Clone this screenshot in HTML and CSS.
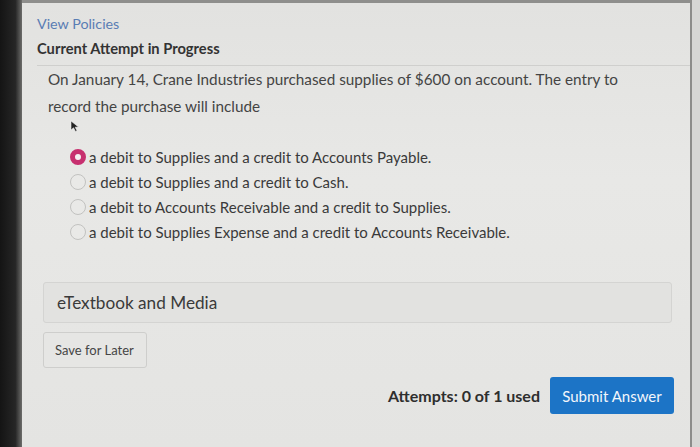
FILE: index.html
```html
<!DOCTYPE html>
<html>
<head>
<meta charset="utf-8">
<link rel="stylesheet" href="styles.css">
</head>
<body>
<div class="screen">
  <div class="bezel"></div>
  <main class="page">
    <a class="policies">View Policies</a>
    <h2 class="attempt-title">Current Attempt in Progress</h2>
    <div class="rule"></div>
    <section class="question">
      <p class="prompt">On January 14, Crane Industries purchased supplies of $600 on account. The entry to record the purchase will include</p>
      <div class="cursor-row">
        <svg class="cursor" width="10" height="12" viewBox="0 0 10 12"><path d="M1 1 L1 10 L3.5 7.8 L5.5 11.5 L7 10.8 L5.2 7.2 L8.5 7 Z" fill="#222" stroke="#eee" stroke-width="0.6"/></svg>
      </div>
      <ul class="options">
        <li class="option"><span class="radio selected"></span>a debit to Supplies and a credit to Accounts Payable.</li>
        <li class="option"><span class="radio"></span>a debit to Supplies and a credit to Cash.</li>
        <li class="option"><span class="radio"></span>a debit to Accounts Receivable and a credit to Supplies.</li>
        <li class="option"><span class="radio"></span>a debit to Supplies Expense and a credit to Accounts Receivable.</li>
      </ul>
    </section>
    <div class="media">eTextbook and Media</div>
    <button class="save">Save for Later</button>
    <div class="footer">
      <span class="attempts">Attempts: 0 of 1 used</span>
      <button class="submit">Submit Answer</button>
    </div>
  </main>
  <div class="edge"></div>
</div>
</body>
</html>
```
FILE: styles.css
```css
* { box-sizing: border-box; }
html, body { margin: 0; padding: 0; }
body {
  width: 700px;
  height: 447px;
  overflow: hidden;
  background: #1b1b1b;
  font-family: Lato, "Open Sans", sans-serif;
  color: #3b3b3b;
}
.screen {
  display: flex;
  height: 447px;
}
.bezel {
  width: 22px;
  background: linear-gradient(to right, #141414 0%, #262626 70%, #6d6d6b 100%);
}
.page {
  flex: 1;
  background: linear-gradient(to bottom, #e2e2e0 0%, #e8e8e6 40%, #e4e4e2 100%);
  border-top: 3px solid #8e8e8c;
  padding: 12px 0 0 15px;
  display: flex;
  flex-direction: column;
  align-items: flex-start;
}
.edge {
  width: 10px;
  background: #d6d6d4;
  border-left: 2px solid #8c8c8a;
}
.policies {
  font-size: 14.3px;
  color: #5a7db4;
  line-height: 18px;
}
.attempt-title {
  margin: 6px 0 0;
  font-size: 14.7px;
  font-weight: 700;
  color: #333;
  line-height: 18px;
}
.rule {
  align-self: stretch;
  margin: 8px 0 0;
  height: 1px;
  background: #cfcfcd;
}
.question {
  padding: 0 0 0 11px;
}
.prompt {
  margin: 0;
  width: 580px;
  font-size: 15.3px;
  line-height: 27px;
  color: #444;
}
.cursor-row {
  height: 16px;
  padding-left: 22px;
}
.cursor { display: block; margin-top: 0; }
.options {
  list-style: none;
  margin: 8px 0 0;
  padding: 0 0 0 22px;
}
.option {
  display: flex;
  align-items: center;
  height: 25px;
  font-size: 15px;
  color: #3a3a3a;
}
.radio {
  width: 16px;
  height: 16px;
  border-radius: 50%;
  border: 1px solid #c2c2c0;
  background: #e9e9e7;
  margin-right: 3px;
}
.radio.selected {
  border: 5px solid #c7306f;
  background: #f4f0f2;
}
.media {
  align-self: stretch;
  margin: 38px 18px 0 6px;
  height: 41px;
  padding: 0 13px;
  display: flex;
  align-items: center;
  border: 1px solid #d4d4d2;
  border-radius: 3px;
  background: #e2e2e0;
  font-size: 17.2px;
  color: #3a3a3a;
}
.save {
  margin: 9px 0 0 6px;
  height: 36px;
  width: 104px;
  padding: 0 0 0 11px;
  text-align: left;
  border: 1px solid #cececc;
  border-radius: 3px;
  background: #e6e6e4;
  font-family: Lato, sans-serif;
  font-size: 13px;
  color: #454545;
}
.footer {
  align-self: stretch;
  margin: 9px 16px 0 0;
  display: flex;
  justify-content: flex-end;
  align-items: center;
  gap: 10px;
}
.attempts {
  font-size: 16px;
  font-weight: 700;
  color: #2e2e2e;
}
.submit {
  height: 37px;
  width: 124px;
  border: none;
  border-radius: 3px;
  background: #1c74c6;
  color: #f2f6fb;
  font-family: Lato, sans-serif;
  font-size: 15px;
}
```
